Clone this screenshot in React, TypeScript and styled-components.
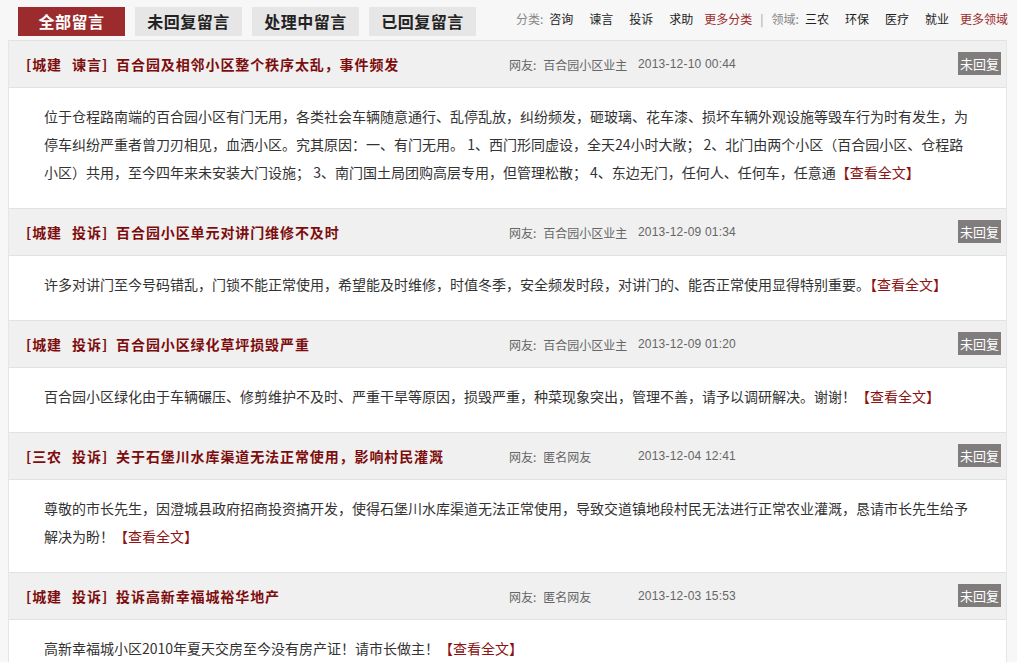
import React from "react";
import styled, { createGlobalStyle } from "styled-components";

const GlobalStyle = createGlobalStyle`
  html, body {
    margin: 0;
    padding: 0;
    background: #f7f7f7;
    overflow: hidden;
  }
  body {
    font-family: "Noto Sans CJK SC", "Noto Sans", sans-serif;
    color: #333;
  }
`;

const Page = styled.div`
  width: 1017px;
  display: flex;
  flex-direction: column;
`;

const TopBar = styled.div`
  display: flex;
  align-items: center;
  height: 40px;
  padding: 0 9px 0 18px;
  box-sizing: border-box;
`;

const Tabs = styled.div`
  display: flex;
  gap: 10px;
  padding-top: 2px;
`;

const Tab = styled.a<{ $active?: boolean }>`
  width: 107px;
  height: 29px;
  display: flex;
  align-items: center;
  justify-content: center;
  font-size: 16px;
  font-weight: 700;
  letter-spacing: 0.5px;
  background: ${(p) => (p.$active ? "#9b2b2c" : "#e6e6e6")};
  color: ${(p) => (p.$active ? "#fff" : "#222")};
  cursor: pointer;
`;

const Filters = styled.div`
  margin-left: auto;
  display: flex;
  align-items: center;
  font-size: 12px;
  padding-bottom: 4px;
`;

const FilterLabel = styled.span`
  color: #888;
  margin-right: 6px;
`;

const FilterItem = styled.a<{ $gap?: number }>`
  color: #222;
  margin-right: ${(p) => p.$gap ?? 16}px;
  cursor: pointer;
`;

const MoreLink = styled.a`
  color: #9b2b2c;
  cursor: pointer;
`;

const Divider = styled.span`
  color: #999;
  margin: 0 8px;
`;

const List = styled.div`
  width: 999px;
  margin-left: 8px;
  border-left: 1px solid #e6e6e6;
  border-right: 1px solid #e6e6e6;
  box-sizing: border-box;
  background: #fff;
`;

const Item = styled.div`
  display: flex;
  flex-direction: column;
`;

const Header = styled.div`
  height: 48px;
  box-sizing: border-box;
  display: flex;
  align-items: center;
  background: #f0f0f0;
  border-top: 1px solid #e2e2e2;
  border-bottom: 1px solid #e2e2e2;
  padding: 0 5px 0 17px;
`;

const Title = styled.a`
  width: 483px;
  font-size: 14px;
  font-weight: 700;
  letter-spacing: 0.9px;
  color: #7d0d0d;
  white-space: nowrap;
  cursor: pointer;
`;

const Tag = styled.span`
  word-spacing: 6px;
  margin-right: 8px;
`;

const Author = styled.span`
  width: 129px;
  font-size: 12px;
  color: #666;
  white-space: nowrap;
`;

const AuthorLabel = styled.span`
  margin-right: 7px;
`;

const Time = styled.span`
  font-family: "Liberation Sans", sans-serif;
  font-size: 12px;
  letter-spacing: 0.2px;
  color: #666;
`;

const Badge = styled.span`
  margin-left: auto;
  height: 23px;
  padding: 0 2px;
  display: flex;
  align-items: center;
  background: #807c7c;
  color: #fff;
  font-size: 13px;
  margin-bottom: 1px;
`;

const Body = styled.div`
  padding: 14px 37px 22px 35px;
  font-size: 14px;
  line-height: 28px;
  color: #333;
`;

const More = styled.a`
  color: #8b1313;
  cursor: pointer;
`;

type Post = {
  area: string;
  kind: string;
  title: string;
  author: string;
  time: string;
  text: string;
};

const posts: Post[] = [
  {
    area: "城建",
    kind: "谏言",
    title: "百合园及相邻小区整个秩序太乱，事件频发",
    author: "百合园小区业主",
    time: "2013-12-10 00:44",
    text:
      "位于仓程路南端的百合园小区有门无用，各类社会车辆随意通行、乱停乱放，纠纷频发，砸玻璃、花车漆、损坏车辆外观设施等毁车行为时有发生，为停车纠纷严重者曾刀刃相见，血洒小区。究其原因：一、有门无用。 1、西门形同虚设，全天24小时大敞； 2、北门由两个小区（百合园小区、仓程路小区）共用，至今四年来未安装大门设施； 3、南门国土局团购高层专用，但管理松散； 4、东边无门，任何人、任何车，任意通",
  },
  {
    area: "城建",
    kind: "投诉",
    title: "百合园小区单元对讲门维修不及时",
    author: "百合园小区业主",
    time: "2013-12-09 01:34",
    text:
      "许多对讲门至今号码错乱，门锁不能正常使用，希望能及时维修，时值冬季，安全频发时段，对讲门的、能否正常使用显得特别重要。",
  },
  {
    area: "城建",
    kind: "投诉",
    title: "百合园小区绿化草坪损毁严重",
    author: "百合园小区业主",
    time: "2013-12-09 01:20",
    text:
      "百合园小区绿化由于车辆碾压、修剪维护不及时、严重干旱等原因，损毁严重，种菜现象突出，管理不善，请予以调研解决。谢谢！",
  },
  {
    area: "三农",
    kind: "投诉",
    title: "关于石堡川水库渠道无法正常使用，影响村民灌溉",
    author: "匿名网友",
    time: "2013-12-04 12:41",
    text:
      "尊敬的市长先生，因澄城县政府招商投资搞开发，使得石堡川水库渠道无法正常使用，导致交道镇地段村民无法进行正常农业灌溉，恳请市长先生给予解决为盼！",
  },
  {
    area: "城建",
    kind: "投诉",
    title: "投诉高新幸福城裕华地产",
    author: "匿名网友",
    time: "2013-12-03 15:53",
    text: "高新幸福城小区2010年夏天交房至今没有房产证！请市长做主！",
  },
];

const tabs = ["全部留言", "未回复留言", "处理中留言", "已回复留言"];
const categories = ["咨询", "谏言", "投诉", "求助"];
const fields = ["三农", "环保", "医疗", "就业"];

export default function App() {
  return (
    <Page>
      <GlobalStyle />
      <TopBar>
        <Tabs>
          {tabs.map((t, i) => (
            <Tab key={t} $active={i === 0}>
              {t}
            </Tab>
          ))}
        </Tabs>
        <Filters>
          <FilterLabel>分类:</FilterLabel>
          {categories.map((c, i) => (
            <FilterItem key={c} $gap={i === categories.length - 1 ? 11 : 16}>
              {c}
            </FilterItem>
          ))}
          <MoreLink>更多分类</MoreLink>
          <Divider>|</Divider>
          <FilterLabel>领域:</FilterLabel>
          {fields.map((c, i) => (
            <FilterItem key={c} $gap={i === fields.length - 1 ? 11 : 16}>
              {c}
            </FilterItem>
          ))}
          <MoreLink>更多领域</MoreLink>
        </Filters>
      </TopBar>
      <List>
        {posts.map((p) => (
          <Item key={p.time}>
            <Header>
              <Title>
                <Tag>
                  [{p.area} {p.kind}]
                </Tag>
                {p.title}
              </Title>
              <Author>
                <AuthorLabel>网友:</AuthorLabel>
                {p.author}
              </Author>
              <Time>{p.time}</Time>
              <Badge>未回复</Badge>
            </Header>
            <Body>
              {p.text}
              <More>【查看全文】</More>
            </Body>
          </Item>
        ))}
      </List>
    </Page>
  );
}
